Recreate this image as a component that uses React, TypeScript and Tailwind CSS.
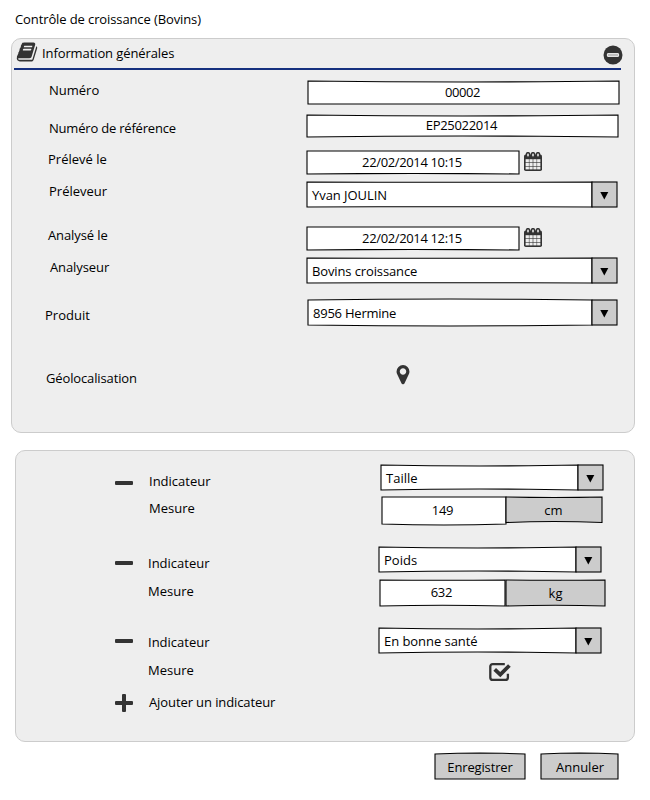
import React from "react";

type Bow = { t?: number; b?: number };

/* Rectangle with a hand-drawn outline: top and bottom edges bend slightly. */
function Sketch({ w, h, t = 0, b = 0, fill = "#fff", className = "", children }: Bow & {
  w: number; h: number; fill?: string; className?: string; children?: React.ReactNode;
}) {
  const d = `M0 0L${w * 0.25} ${t * 0.75}L${w / 2} ${t}L${w * 0.75} ${t * 0.75}L${w} 0V${h}L${w * 0.75} ${h + b * 0.75}L${w / 2} ${h + b}L${w * 0.25} ${h + b * 0.75}L0 ${h}Z`;
  return (
    <div className={`relative flex shrink-0 items-center justify-center ${className}`} style={{ width: w, height: h }}>
      <svg className="absolute left-0 top-0 overflow-visible" width={w} height={h}>
        <path d={d} fill={fill} stroke="#000" strokeWidth="1.1" />
      </svg>
      <span className="relative">{children}</span>
    </div>
  );
}

function Select({ w, h = 25, split, t = 1, b = -1, children, className = "" }: Bow & {
  w: number; h?: number; split: number; children: React.ReactNode; className?: string;
}) {
  const d = `M0 0L${split * 0.25} ${t * 0.75}L${split / 2} ${t}L${split * 0.75} ${t * 0.75}L${split} 0V${h}L${split * 0.75} ${h + b * 0.75}L${split / 2} ${h + b}L${split * 0.25} ${h + b * 0.75}L0 ${h}Z`;
  return (
    <div className={`relative flex shrink-0 items-center pl-[5px] ${className}`} style={{ width: w, height: h }}>
      <svg className="absolute left-0 top-0 overflow-visible" width={w} height={h}>
        <path d={d} fill="#fff" stroke="#000" strokeWidth="1.1" />
        <rect x={split} y="0" width={w - split} height={h} fill="#ccc" stroke="#000" strokeWidth="1.1" />
        <path d={`M${split + 8.3} 10h8l-4 7.600z`} fill="#000" />
      </svg>
      <span className="relative">{children}</span>
    </div>
  );
}

function Row({ className, label, labelClass, children }: {
  className: string; label: string; labelClass: string; children?: React.ReactNode;
}) {
  return (
    <div className={`flex items-start ${className}`}>
      <div className={`shrink-0 leading-[18px] ${labelClass}`}>{label}</div>
      {children}
    </div>
  );
}

function Calendar() {
  return (
    <svg className="ml-[5px] mt-[2px] shrink-0" width="18" height="20" viewBox="0 0 18 20">
      <rect x="0" y="2.4" width="18" height="16.6" rx="1.8" fill="#333" />
      {[1.6, 5.4, 9.3, 13.1].map((x) =>
        [7.2, 10.9, 14.6].map((y) => <rect key={`${x}-${y}`} x={x} y={y} width="3.3" height={y > 14 ? 2.8 : 3.1} fill="#eee" />)
      )}
      {[4, 9, 14].map((x) => (
        <rect key={x} x={x - 1.6} y="0.7" width="3.2" height="4.6" rx="1.5" fill="#ddd" stroke="#333" strokeWidth="1.5" />
      ))}
    </svg>
  );
}

function Minus({ className }: { className: string }) {
  return <div className={`h-1 w-[18px] shrink-0 rounded-[1px] bg-[#333] ${className}`} />;
}

export default function App() {
  return (
    <div className="h-[800px] w-[650px] overflow-hidden bg-white pt-[10px] font-['Open_Sans',sans-serif] text-[13px] leading-[18px] text-black">
      <h1 className="h-[28px] pl-[15px] tracking-[-0.11px]">Contrôle de croissance (Bovins)</h1>

      <section className="ml-[11px] h-[395px] w-[624px] rounded-[10px] border border-[#ccc] bg-[#eee]">
        <header className="ml-[2px] flex h-[31px] w-[607px] items-start border-b-2 border-[#16307f]">
          <svg className="ml-[2px] mt-[2px] shrink-0" width="22" height="22" viewBox="0 0 1792 1792" fill="#333">
            <path d="M1703 478q40 57 18 129l-275 906q-19 64-76.5 107.5t-122.5 43.5h-923q-77 0-148.5-53.5t-99.5-131.5q-24-67-2-127 0-4 3-27t4-37q1-8-3-21.5t-3-19.5q2-11 8-21t16.5-23.5 16.5-23.5q23-38 45-91.5t30-91.5q3-10 .5-30t-.5-28q3-11 17-28t17-23q21-36 42-92t25-90q1-9-2.5-32t.5-28q4-13 22-30.5t22-22.5q19-26 42.5-84.5t27.5-96.5q1-8-3-25.5t-2-26.5q2-8 9-18t18-23 17-21q8-12 16.5-30.5t15-35 16-36 19.5-32 26.5-23.5 36-11.5 47.5 5.5l-1 3q38-9 51-9h761q74 0 114 56t18 130l-274 906q-36 119-71.5 153.5t-128.5 34.5h-869q-27 0-38 15-11 16-1 43 24 70 144 70h923q29 0 56-15.5t35-41.5l300-987q7-22 5-57 38 15 59 43zm-1064 2q-4 13 2 22.5t20 9.5h608q13 0 25.5-9.5t16.5-22.5l21-64q4-13-2-22.5t-20-9.5h-608q-13 0-25.5 9.5t-16.5 22.5zm-83 256q-4 13 2 22.5t20 9.5h608q13 0 25.5-9.5t16.5-22.5l21-64q4-13-2-22.5t-20-9.5h-608q-13 0-25.5 9.5t-16.5 22.5z" />
          </svg>
          <h2 className="ml-[4px] mt-[5px] w-[561px] shrink-0 tracking-[-0.1px]">Information générales</h2>
          <svg className="mt-[6px] shrink-0" width="20" height="20" viewBox="0 0 20 20">
            <circle cx="10" cy="10" r="9.5" fill="#333" />
            <rect x="4.400" y="8.600" width="11.200" height="2.800" rx="0.4" fill="#bbb" stroke="#fff" strokeWidth="0.9" />
          </svg>
        </header>

        <div className="pt-[11px]">
          <Row className="h-[34px]" label="Numéro" labelClass="pl-[37px] w-[296px]">
            <Sketch w={311} h={23} t={1} className="pr-[2px] pb-[2px] tracking-[-0.4px]">00002</Sketch>
          </Row>
          <Row className="h-[35px]" label="Numéro de référence" labelClass="pl-[37px] mt-[4px] w-[295px] tracking-[-0.2px]">
            <Sketch w={311} h={22} t={1} b={-1} className="pr-[2px] pb-[2px] tracking-[-0.3px]">EP25022014</Sketch>
          </Row>
          <Row className="h-[31px]" label="Prélevé le" labelClass="pl-[36px] w-[295px]">
            <Sketch w={212} h={23} b={-0.5} className="mt-px pr-[2px] pb-[2px] tracking-[-0.36px]">22/02/2014 10:15</Sketch>
            <Calendar />
          </Row>
          <Row className="h-[45px]" label="Préleveur" labelClass="pl-[37px] mt-px w-[295px]">
            <Select w={310} split={285} t={0.3} b={-0.3} className="mt-px tracking-[-0.05px]">Yvan JOULIN</Select>
          </Row>
          <Row className="h-[31px]" label="Analysé le" labelClass="pl-[36px] w-[295px] tracking-[-0.1px]">
            <Sketch w={212} h={23} b={-0.5} className="mt-px pr-[2px] pb-[2px] tracking-[-0.36px]">22/02/2014 12:15</Sketch>
            <Calendar />
          </Row>
          <Row className="h-[42px]" label="Analyseur" labelClass="pl-[38px] mt-px w-[295px] tracking-[-0.1px]">
            <Select w={310} split={285} t={0.3} b={-0.3} className="mt-px tracking-[-0.12px]">Bovins croissance</Select>
          </Row>
          <Row className="h-[66px]" label="Produit" labelClass="pl-[33px] mt-[7px] w-[296px]">
            <Select w={309} split={284} t={-1} b={1} className="mt-px tracking-[-0.23px]">8956 Hermine</Select>
          </Row>
          <Row className="h-[30px]" label="Géolocalisation" labelClass="pl-[34px] mt-[4px] w-[384px] tracking-[-0.13px]">
            <svg width="14" height="20" viewBox="340 128 1112 1588" fill="#333">
              <path d="M1152 640q0-106-75-181t-181-75-181 75-75 181 75 181 181 75 181-75 75-181zm256 0q0 109-33 179l-364 774q-16 33-47.5 52t-67.5 19-67.5-19-46.5-52l-365-774q-33-70-33-179 0-212 150-362t362-150 362 150 150 362z" />
            </svg>
          </Row>
        </div>
      </section>

      <section className="ml-[15px] mt-[17px] h-[292px] w-[620px] rounded-[10px] border border-[#ccc] bg-[#eee] pl-[99px] pt-[14px]">
        <div className="flex h-[32px] items-start">
          <Minus className="mt-[16px]" />
          <Row className="" label="Indicateur" labelClass="pl-[16px] mt-[7px] w-[248px]">
            <Select w={222} split={197}>Taille</Select>
          </Row>
        </div>
        <Row className="h-[50px]" label="Mesure" labelClass="pl-[34px] mt-[2px] w-[267px]">
          <Sketch w={124} h={27} b={1} className="pr-[3px] pb-[2px] tracking-[-0.3px]">149</Sketch>
          <Sketch w={96} h={25.5} t={0.5} b={-1} fill="#ccc" className="pr-px">cm</Sketch>
        </Row>
        <div className="flex h-[33px] items-start">
          <Minus className="mt-[14px]" />
          <Row className="" label="Indicateur" labelClass="pl-[15px] mt-[7px] w-[246px]">
            <Select w={222} split={197}>Poids</Select>
          </Row>
        </div>
        <Row className="h-[48px]" label="Mesure" labelClass="pl-[33px] mt-[2px] w-[265px]">
          <Sketch w={125} h={26} t={0.3} b={-0.7} className="pr-[2px] pb-[2px] tracking-[-0.2px]">632</Sketch>
          <Sketch w={99} h={26} t={0.3} b={-0.7} fill="#ccc" className="ml-px">kg</Sketch>
        </Row>
        <div className="flex h-[33px] items-start">
          <Minus className="mt-[11px]" />
          <Row className="" label="Indicateur" labelClass="pl-[15px] mt-[5px] w-[246px]">
            <Select w={222} split={197} className="tracking-[-0.05px]">En bonne santé</Select>
          </Row>
        </div>
        <Row className="h-[32px]" label="Mesure" labelClass="pl-[33px] w-[374px]">
          <svg className="mt-[1px]" width="22" height="20" viewBox="0 0 22 20" fill="none" stroke="#333">
            <path d="M15.800 2.100H3.800Q1.300 2.100 1.300 4.600V15.400Q1.300 17.900 3.800 17.900H16.400Q18.900 17.900 18.900 15.400V11.800" strokeWidth="2.300" />
            <path d="M5.700 7.300L11.300 12.600L20.400 3.500" strokeWidth="3.800" />
          </svg>
        </Row>
        <div className="flex items-start">
          <svg className="mt-px" width="18" height="18" viewBox="0 0 18 18" fill="#333">
            <rect x="0" y="7" width="18" height="4" rx="1" />
            <rect x="7" y="0" width="4" height="18" rx="1" />
          </svg>
          <span className="ml-[16px] tracking-[-0.1px]">Ajouter un indicateur</span>
        </div>
      </section>

      <footer className="ml-[435px] mt-[12px] flex">
        <Sketch w={90} h={25} t={-1} fill="#ccc" className="tracking-[-0.15px]">Enregistrer</Sketch>
        <Sketch w={77} h={25} t={-1} fill="#ccc" className="ml-[16px] pl-px">Annuler</Sketch>
      </footer>
    </div>
  );
}
